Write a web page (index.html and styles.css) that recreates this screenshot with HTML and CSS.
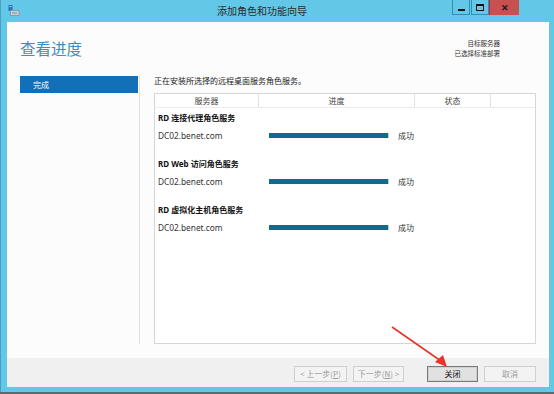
FILE: index.html
```html
<!DOCTYPE html>
<html lang="zh-CN">
<head>
<meta charset="utf-8">
<title>添加角色和功能向导</title>
<link rel="stylesheet" href="styles.css">
</head>
<body>
<div class="window">
  <div class="titlebar">
    <svg class="app-icon" width="12" height="12" viewBox="0 0 12 12">
      <rect x="0.5" y="0" width="4" height="6" fill="#2f6fc0"/>
      <rect x="1.5" y="1" width="2" height="1" fill="#9fd0f5"/>
      <rect x="2" y="5" width="9.5" height="6" fill="#8a9aa8"/>
      <rect x="3" y="6" width="7.5" height="4" fill="#c7d3dc"/>
      <rect x="4" y="7.5" width="5" height="1" fill="#7d8c99"/>
    </svg>
    <div class="title">添加角色和功能向导</div>
    <div class="controls">
      <div class="ctl ctl-min"><span class="min-glyph"></span></div>
      <div class="ctl ctl-max"><span class="max-glyph"></span></div>
      <div class="ctl ctl-close">✕</div>
    </div>
  </div>
  <div class="client">
    <div class="header">
      <h1 class="heading">查看进度</h1>
      <div class="dest">
        <div>目标服务器</div>
        <div>已选择标准部署</div>
      </div>
    </div>
    <div class="main">
      <div class="nav">
        <div class="nav-item active">完成</div>
      </div>
      <div class="content">
        <p class="intro">正在安装所选择的远程桌面服务角色服务。</p>
        <div class="table">
          <div class="thead">
            <div class="th c1">服务器</div>
            <div class="th c2">进度</div>
            <div class="th c3">状态</div>
            <div class="th c4"></div>
          </div>
          <div class="tbody">
            <div class="group">
              <div class="group-title">RD 连接代理角色服务</div>
              <div class="row">
                <span class="server">DC02.benet.com</span>
                <span class="bar"></span>
                <span class="status">成功</span>
              </div>
            </div>
            <div class="group">
              <div class="group-title">RD Web 访问角色服务</div>
              <div class="row">
                <span class="server">DC02.benet.com</span>
                <span class="bar"></span>
                <span class="status">成功</span>
              </div>
            </div>
            <div class="group">
              <div class="group-title">RD 虚拟化主机角色服务</div>
              <div class="row">
                <span class="server">DC02.benet.com</span>
                <span class="bar"></span>
                <span class="status">成功</span>
              </div>
            </div>
          </div>
        </div>
      </div>
    </div>
    <div class="footer">
      <button class="btn disabled btn-prev">&lt; 上一步(<u>P</u>)</button>
      <button class="btn disabled btn-next">下一步(<u>N</u>) &gt;</button>
      <button class="btn primary btn-close">关闭</button>
      <button class="btn disabled btn-cancel">取消</button>
    </div>
  </div>
  <div class="taskstrip"></div>
  <svg class="arrow" width="554" height="394" viewBox="0 0 554 394">
    <path d="M392 327 L441 361" stroke="#e8332b" stroke-width="1.6" fill="none"/>
    <polygon points="447,367 435,362 443,355" fill="#e8332b"/>
  </svg>
</div>
</body>
</html>
```

FILE: styles.css
```css
* { box-sizing: border-box; }
html, body {
  margin: 0;
  padding: 0;
  width: 554px;
  height: 394px;
  overflow: hidden;
  background: #63c8e8;
}
body {
  font-family: "Noto Sans", "Noto Sans CJK SC", sans-serif;
  font-size: 8px;
  color: #222;
}
.window {
  position: relative;
  width: 554px;
  height: 394px;
  background: #63c8e8;
  display: flex;
  flex-direction: column;
  padding: 0 5px 0 6px;
  border-left: 1px solid #4a9fbd;
}
.titlebar {
  height: 22px;
  display: flex;
  align-items: flex-start;
  position: relative;
}
.app-icon {
  margin: 5px 0 0 1px;
}
.title {
  position: absolute;
  left: 0;
  right: 0;
  top: 4px;
  text-align: center;
  font-family: "Noto Sans CJK SC", sans-serif;
  font-size: 10px;
  line-height: 14px;
  color: #2b2b2b;
  padding-right: 32px;
  pointer-events: none;
}
.controls {
  margin-left: auto;
  margin-right: 30px;
  display: flex;
  height: 15px;
}
.ctl {
  height: 15px;
  display: flex;
  align-items: center;
  justify-content: center;
}
.ctl-min, .ctl-max {
  width: 18px;
  border: 1px solid #2e8fb2;
  border-top: none;
  margin-right: 1px;
}
.ctl-max { margin-right: 0; }
.min-glyph {
  display: block;
  width: 7px;
  height: 2px;
  background: #111;
  margin-top: 5px;
}
.max-glyph {
  display: block;
  width: 8px;
  height: 7px;
  border: 1px solid #111;
  border-top-width: 2px;
}
.ctl-close {
  width: 30px;
  background: #c75050;
  color: #1a1a1a;
  font-size: 9px;
  font-weight: bold;
  border-left: 1px solid #9a3b3b;
}
.client {
  flex: 1;
  background: #fcfcfc;
  display: flex;
  flex-direction: column;
  min-height: 0;
}
.header {
  height: 54px;
  display: flex;
  justify-content: space-between;
  padding: 0 49px 0 13px;
}
.heading {
  margin: 16px 0 0;
  font-family: "Noto Sans CJK SC", sans-serif;
  font-weight: normal;
  font-size: 15.5px;
  line-height: 20px;
  color: #3d8fb8;
}
.dest {
  margin-top: 16px;
  text-align: right;
  font-family: "Noto Sans CJK SC", sans-serif;
  font-size: 6.5px;
  line-height: 10px;
  color: #333;
}
.main {
  flex: 1;
  display: flex;
  padding: 0 13px 14px 13px;
  min-height: 0;
}
.nav {
  width: 120px;
  border-right: 1px solid #e0e0e0;
}
.nav-item {
  height: 17px;
  width: 118px;
  line-height: 17px;
  padding-left: 13px;
  font-family: "Noto Sans CJK SC", sans-serif;
  font-size: 8px;
}
.nav-item.active {
  background: #1270b8;
  color: #fff;
}
.content {
  flex: 1;
  margin-left: 14px;
  display: flex;
  flex-direction: column;
}
.intro {
  margin: -2px 0 5px;
  line-height: 14px;
  font-family: "Noto Sans CJK SC", sans-serif;
  font-size: 8px;
  color: #222;
}
.table {
  flex: 1;
  border: 1px solid #d6d6d6;
  background: #fff;
  display: flex;
  flex-direction: column;
}
.thead {
  display: flex;
  height: 14px;
  border-bottom: 1px solid #ececec;
}
.th {
  line-height: 13px;
  text-align: center;
  font-family: "Noto Sans CJK SC", sans-serif;
  font-size: 8px;
  color: #444;
  border-right: 1px solid #e2e2e2;
}
.c1 { width: 104px; }
.c2 { width: 156px; }
.c3 { width: 76px; }
.c4 { flex: 1; border-right: none; }
.tbody {
  padding: 3px 0 0 3px;
}
.group {
  margin-bottom: 15px;
}
.group-title {
  line-height: 14px;
  font-weight: bold;
  font-size: 8px;
  color: #111;
  margin-bottom: 3px;
}
.row {
  display: flex;
  align-items: center;
  height: 14px;
}
.server {
  width: 111px;
  font-size: 8.3px;
  color: #333;
}
.bar {
  width: 120px;
  height: 5px;
  background: #0e6c8b;
  border-right: 1px solid #c9c9c9;
  margin-right: 9px;
}
.status {
  font-family: "Noto Sans CJK SC", sans-serif;
  font-size: 8px;
  color: #333;
}
.footer {
  height: 29px;
  background: #f0f0f0;
  display: flex;
  align-items: flex-start;
  padding: 8px 13px 0 0;
  justify-content: flex-end;
}
.btn {
  height: 16px;
  padding: 0;
  font-family: "Noto Sans CJK SC", sans-serif;
  font-size: 8px;
  line-height: 14px;
  background: #f3f3f3;
  border: 1px solid #cfcfcf;
  color: #9a9a9a;
}
.btn u { text-decoration: underline; }
.btn-prev { width: 53px; margin-right: 6px; }
.btn-next { width: 51px; margin-right: 23px; }
.btn-close { width: 51px; margin-right: 6px; }
.btn-cancel { width: 52px; }
.btn.primary {
  background: #e1e1e1;
  border: 1px solid #7a7a7a;
  box-shadow: inset 0 0 0 1px #d0d0d0;
  color: #111;
}
.taskstrip {
  height: 2px;
  margin: 5px -5px 0 -7px;
  background: #5a6a70;
}
.arrow {
  position: absolute;
  left: -1px;
  top: 0;
  pointer-events: none;
}
```
